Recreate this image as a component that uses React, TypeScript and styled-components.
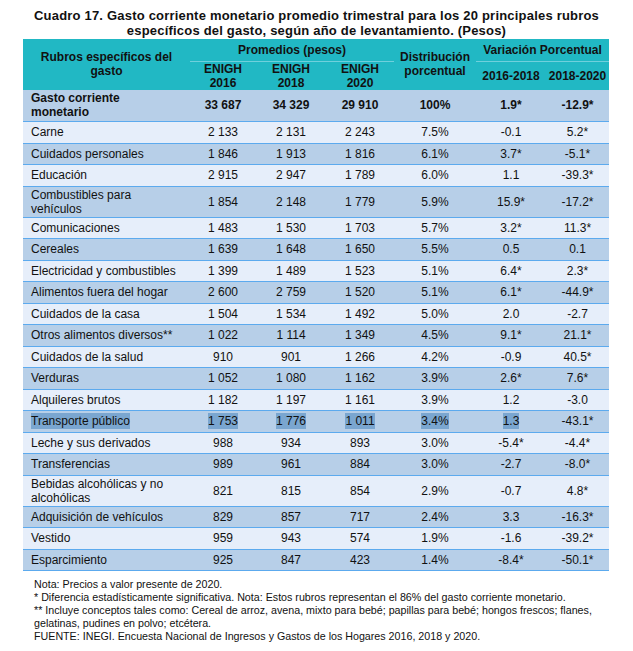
import React from 'react';
import styled, { createGlobalStyle } from 'styled-components';

const GlobalStyle = createGlobalStyle`
  html, body {
    margin: 0;
    padding: 0;
    background: #ffffff;
  }
  body {
    font-family: 'Liberation Sans', Arial, sans-serif;
    color: #111111;
  }
`;

type Row = {
  name: React.ReactNode;
  values: string[];
  marked?: boolean;
};

const rows: Row[] = [
  { name: 'Carne', values: ['2 133', '2 131', '2 243', '7.5%', '-0.1', '5.2*'] },
  { name: 'Cuidados personales', values: ['1 846', '1 913', '1 816', '6.1%', '3.7*', '-5.1*'] },
  { name: 'Educación', values: ['2 915', '2 947', '1 789', '6.0%', '1.1', '-39.3*'] },
  { name: <>Combustibles para<br />vehículos</>, values: ['1 854', '2 148', '1 779', '5.9%', '15.9*', '-17.2*'] },
  { name: 'Comunicaciones', values: ['1 483', '1 530', '1 703', '5.7%', '3.2*', '11.3*'] },
  { name: 'Cereales', values: ['1 639', '1 648', '1 650', '5.5%', '0.5', '0.1'] },
  { name: 'Electricidad y combustibles', values: ['1 399', '1 489', '1 523', '5.1%', '6.4*', '2.3*'] },
  { name: 'Alimentos fuera del hogar', values: ['2 600', '2 759', '1 520', '5.1%', '6.1*', '-44.9*'] },
  { name: 'Cuidados de la casa', values: ['1 504', '1 534', '1 492', '5.0%', '2.0', '-2.7'] },
  { name: 'Otros alimentos diversos**', values: ['1 022', '1 114', '1 349', '4.5%', '9.1*', '21.1*'] },
  { name: 'Cuidados de la salud', values: ['910', '901', '1 266', '4.2%', '-0.9', '40.5*'] },
  { name: 'Verduras', values: ['1 052', '1 080', '1 162', '3.9%', '2.6*', '7.6*'] },
  { name: 'Alquileres brutos', values: ['1 182', '1 197', '1 161', '3.9%', '1.2', '-3.0'] },
  { name: 'Transporte público', values: ['1 753', '1 776', '1 011', '3.4%', '1.3', '-43.1*'], marked: true },
  { name: 'Leche y sus derivados', values: ['988', '934', '893', '3.0%', '-5.4*', '-4.4*'] },
  { name: 'Transferencias', values: ['989', '961', '884', '3.0%', '-2.7', '-8.0*'] },
  { name: <>Bebidas alcohólicas y no<br />alcohólicas</>, values: ['821', '815', '854', '2.9%', '-0.7', '4.8*'] },
  { name: 'Adquisición de vehículos', values: ['829', '857', '717', '2.4%', '3.3', '-16.3*'] },
  { name: 'Vestido', values: ['959', '943', '574', '1.9%', '-1.6', '-39.2*'] },
  { name: 'Esparcimiento', values: ['925', '847', '423', '1.4%', '-8.4*', '-50.1*'] },
];

const colWidths = [167, 66, 70, 68, 82, 70, 63];

const Page = styled.div`
  width: 633px;
  padding-top: 8px;
`;

const Title = styled.h1`
  margin: 0;
  text-align: center;
  font-size: 13px;
  line-height: 15px;
  font-weight: bold;
  letter-spacing: 0.2px;
  white-space: nowrap;
`;

const Table = styled.table`
  margin: 1px 0 0 23px;
  width: 586px;
  border-collapse: collapse;
  table-layout: fixed;
  font-size: 12px;
`;

const HeadCell = styled.th<{ $divided?: boolean }>`
  background: #21b8c4;
  font-weight: bold;
  font-size: 12px;
  line-height: 14px;
  text-align: center;
  padding: 0 2px;
  vertical-align: middle;
  border-bottom: ${({ $divided }) => ($divided ? '1px solid #6fd0dc' : 'none')};
`;

const HeadTopRow = styled.tr`
  height: 22px;
`;

const HeadBottomRow = styled.tr`
  height: 28px;
`;

const BodyRow = styled.tr<{ $shade: boolean }>`
  height: 21.5px;
  background: ${({ $shade }) => ($shade ? '#b7cfe8' : '#e6eefa')};
  border-bottom: 1px solid #5caaee;
`;

const TotalRow = styled(BodyRow)`
  height: 32px;
  font-weight: bold;
`;

const NameCell = styled.td`
  text-align: left;
  padding: 1px 4px 1px 8px;
  line-height: 14px;
  vertical-align: middle;
`;

const NumCell = styled.td`
  text-align: center;
  padding: 1px 2px;
  line-height: 14px;
  vertical-align: middle;
`;

const Marked = styled.span<{ $on?: boolean }>`
  background: ${({ $on }) => ($on ? '#7aa6d0' : 'transparent')};
  padding: 1px 0;
`;

const Notes = styled.div`
  padding: 7px 0 0 34px;
  font-size: 10.7px;
  line-height: 13px;
  color: #111111;
  white-space: nowrap;
`;

const Note = styled.div``;

export default function App() {
  return (
    <Page>
      <GlobalStyle />
      <Title>
        Cuadro 17. Gasto corriente monetario promedio trimestral para los 20 principales rubros
        <br />
        específicos del gasto, según año de levantamiento. (Pesos)
      </Title>
      <Table>
        <colgroup>
          {colWidths.map((w, i) => (
            <col key={i} style={{ width: w }} />
          ))}
        </colgroup>
        <thead>
          <HeadTopRow>
            <HeadCell rowSpan={2}>
              Rubros específicos del
              <br />
              gasto
            </HeadCell>
            <HeadCell colSpan={3} $divided>
              Promedios (pesos)
            </HeadCell>
            <HeadCell rowSpan={2}>
              Distribución
              <br />
              porcentual
            </HeadCell>
            <HeadCell colSpan={2} $divided>
              Variación Porcentual
            </HeadCell>
          </HeadTopRow>
          <HeadBottomRow>
            <HeadCell>
              ENIGH
              <br />
              2016
            </HeadCell>
            <HeadCell>
              ENIGH
              <br />
              2018
            </HeadCell>
            <HeadCell>
              ENIGH
              <br />
              2020
            </HeadCell>
            <HeadCell>2016-2018</HeadCell>
            <HeadCell>2018-2020</HeadCell>
          </HeadBottomRow>
        </thead>
        <tbody>
          <TotalRow $shade>
            <NameCell>
              Gasto corriente
              <br />
              monetario
            </NameCell>
            {['33 687', '34 329', '29 910', '100%', '1.9*', '-12.9*'].map((v, i) => (
              <NumCell key={i}>{v}</NumCell>
            ))}
          </TotalRow>
          {rows.map((row, r) => (
            <BodyRow key={r} $shade={r % 2 === 1}>
              <NameCell>
                <Marked $on={row.marked}>{row.name}</Marked>
              </NameCell>
              {row.values.map((v, i) => (
                <NumCell key={i}>
                  <Marked $on={row.marked && i < 5}>{v}</Marked>
                </NumCell>
              ))}
            </BodyRow>
          ))}
        </tbody>
      </Table>
      <Notes>
        <Note>Nota: Precios a valor presente de 2020.</Note>
        <Note>* Diferencia estadísticamente significativa. Nota: Estos rubros representan el 86% del gasto corriente monetario.</Note>
        <Note>
          ** Incluye conceptos tales como: Cereal de arroz, avena, mixto para bebé; papillas para bebé; hongos frescos; flanes,
          <br />
          gelatinas, pudines en polvo; etcétera.
        </Note>
        <Note>FUENTE: INEGI. Encuesta Nacional de Ingresos y Gastos de los Hogares 2016, 2018 y 2020.</Note>
      </Notes>
    </Page>
  );
}
